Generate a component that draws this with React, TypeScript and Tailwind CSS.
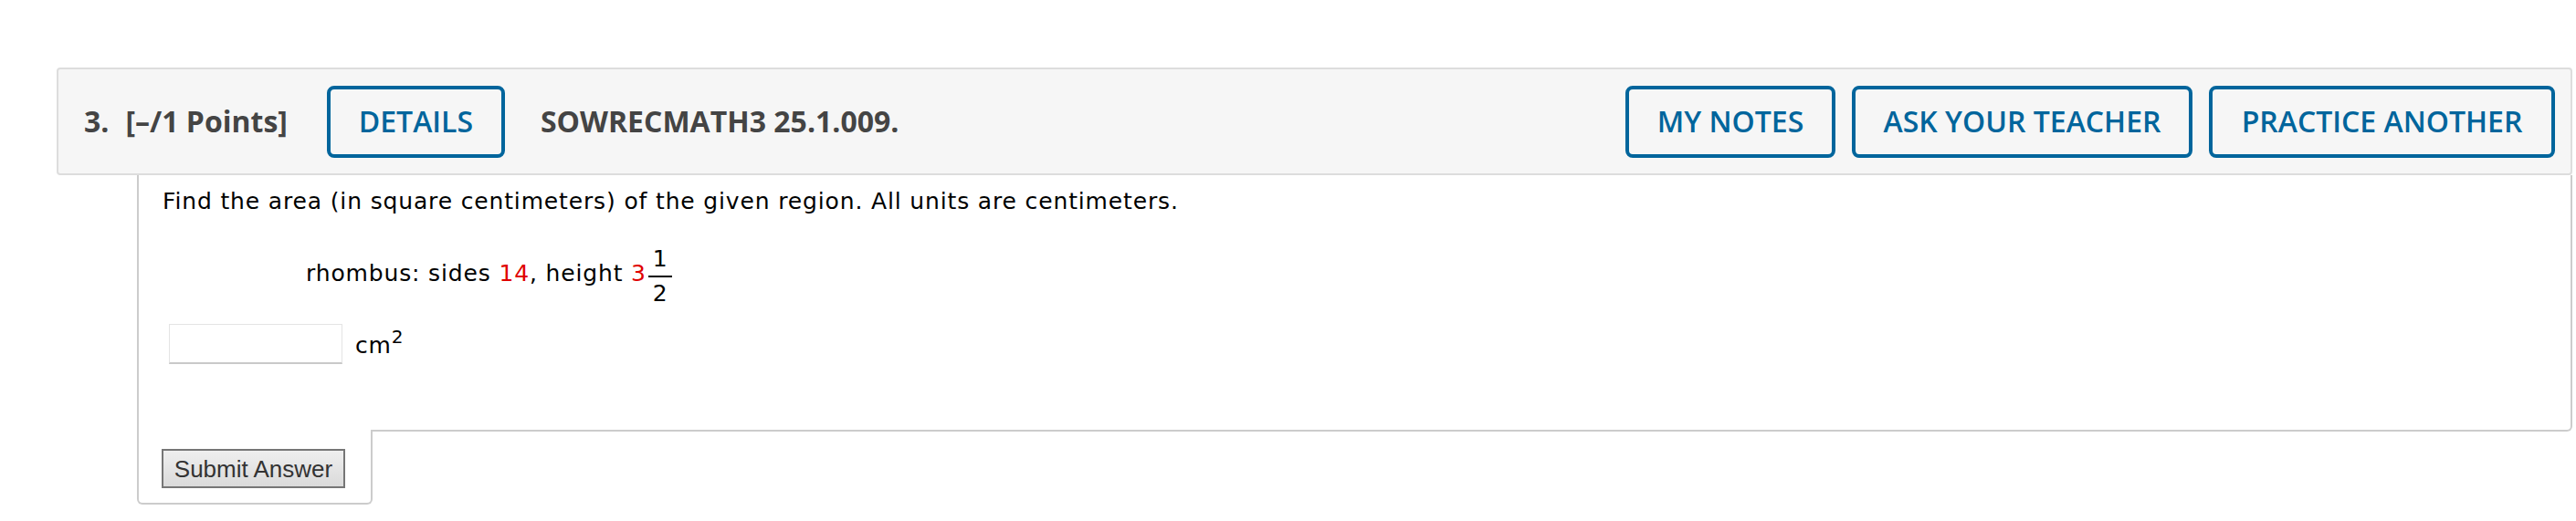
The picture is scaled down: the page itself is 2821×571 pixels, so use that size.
export default function App() {
  const head = { fontFamily: '"Open Sans", "Liberation Sans", sans-serif' };
  const body = { fontFamily: '"DejaVu Sans", Verdana, sans-serif' };

  return (
    <div className="w-full h-[571px] bg-white pl-[62px] pr-[4px] pt-[74px]">
      {/* Question header */}
      <div
        style={head}
        className="h-[118px] flex items-center border-2 border-[#dddddd] rounded-[4px] bg-[#f6f6f6] pl-[28px] pr-[17px]"
      >
        <span className="text-[32px] font-bold text-[#444444] leading-none">3.</span>
        <span className="ml-[18px] text-[32px] font-bold text-[#444444] leading-none">[–/1 Points]</span>
        <button className="ml-[43px] w-[195px] h-[79px] border-4 border-[#00659c] rounded-[8px] text-[32px] font-semibold text-[#00659c] leading-none">
          DETAILS
        </button>
        <span className="ml-[39px] text-[32px] font-bold text-[#444444] leading-none">SOWRECMATH3 25.1.009.</span>
        <div className="flex-1" />
        <div className="flex gap-[18px]">
          <button className="w-[230px] h-[79px] border-4 border-[#00659c] rounded-[8px] text-[32px] font-semibold text-[#00659c] leading-none">
            MY NOTES
          </button>
          <button className="w-[373px] h-[79px] border-4 border-[#00659c] rounded-[8px] text-[32px] font-semibold text-[#00659c] leading-none">
            ASK YOUR TEACHER
          </button>
          <button className="w-[379px] h-[79px] border-4 border-[#00659c] rounded-[8px] text-[32px] font-semibold text-[#00659c] leading-none">
            PRACTICE ANOTHER
          </button>
        </div>
      </div>

      {/* Question body */}
      <div className="ml-[88px]">
        <div
          style={body}
          className="h-[281px] border-x-2 border-b-2 border-[#cccccc] rounded-br-[6px] pl-[26px] pt-[14px] text-black text-[25px] tracking-[0.85px]"
        >
          <p className="leading-[30px]">
            Find the area (in square centimeters) of the given region. All units are centimeters.
          </p>

          <div className="mt-[37px] ml-[157px] flex items-start">
            <span className="mt-[12px] leading-[30px] whitespace-pre">
              rhombus: sides <span className="text-[#e00000]">14</span>, height <span className="text-[#e00000]">3</span>
            </span>
            <div className="ml-[2px] flex flex-col items-center tracking-normal">
              <span className="px-[5px] leading-[22px]">1</span>
              <div className="mt-[7px] h-[2px] w-full bg-black" />
              <span className="mt-[7px] px-[5px] leading-[22px]">2</span>
            </div>
          </div>

          <div className="mt-[22px] flex items-start">
            <input
              type="text"
              className="ml-[7px] w-[190px] h-[44px] bg-white border border-[#e4e4e4] border-b-2 border-b-[#c9c9c9] outline-none"
            />
            <span className="ml-[14px] mt-[9px] leading-[30px]">
              cm<span className="text-[20px] leading-[0] align-[11px]">2</span>
            </span>
          </div>
        </div>

        {/* Submit tab */}
        <div className="-mt-[2px] w-[258px] h-[82px] bg-white border-x-2 border-b-2 border-[#cccccc] rounded-b-[6px] pl-[25px] pt-[21px]">
          <button
            style={{ fontFamily: '"Liberation Sans", Arial, sans-serif' }}
            className="w-[201px] h-[43px] border-2 border-[#767676] bg-gradient-to-b from-[#efefef] to-[#dadada] text-[26px] text-[#333333] leading-none"
          >
            Submit Answer
          </button>
        </div>
      </div>
    </div>
  );
}
